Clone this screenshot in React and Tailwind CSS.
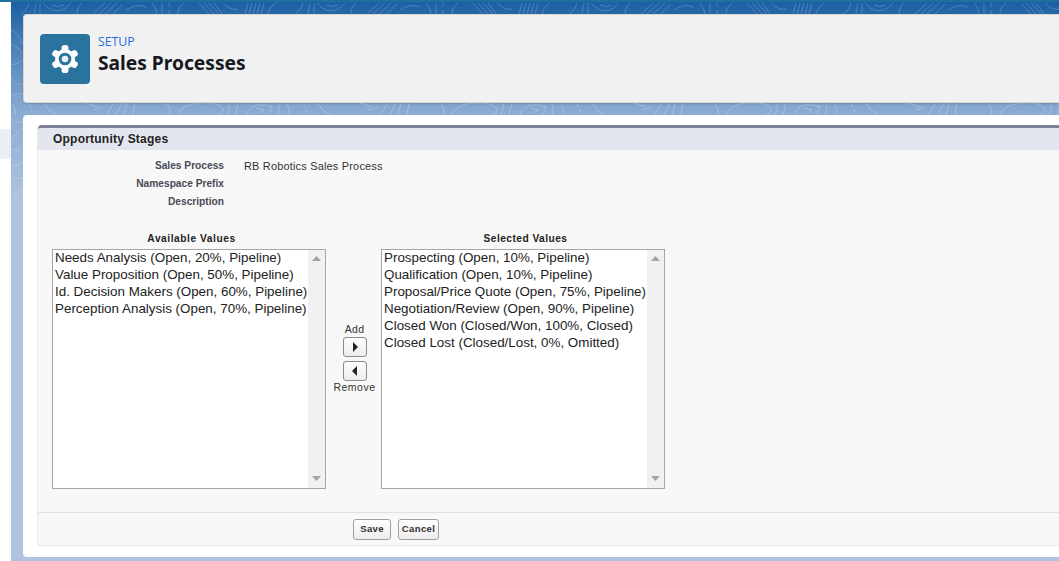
import React from "react";

const left = ["Needs Analysis (Open, 20%, Pipeline)", "Value Proposition (Open, 50%, Pipeline)", "Id. Decision Makers (Open, 60%, Pipeline)", "Perception Analysis (Open, 70%, Pipeline)"];
const right = ["Prospecting (Open, 10%, Pipeline)", "Qualification (Open, 10%, Pipeline)", "Proposal/Price Quote (Open, 75%, Pipeline)", "Negotiation/Review (Open, 90%, Pipeline)", "Closed Won (Closed/Won, 100%, Closed)", "Closed Lost (Closed/Lost, 0%, Omitted)"];

const topBand = "M5 14l3-11M9 14l3-11M13 14l3-11M17 14l3-11M21 14l3-11M28 14q2-8 8-11M55 14q6-3 8-11M68 14l2-11M74 3v11M77 3q14 16 28 0M86 5q6 3 12 0M111 14q0-7 5-11M127 14l12-11M133 14l12-11M139 14l12-11M147 14l10-10M160 10q10-7 20-3M186 3q5 6 5 11M196 3v11M203 3v4M203 10v4M212 14q0-7 6-11M233 3l10 11M238 3l10 11M243 3l10 11M248 3l8 11M257 3q8 8 15 6";
const lowBand = "M6 115q4-10 12-10q8-1 15 2M16 108l8 2l-4 3M30 106q3 5-2 9M38 103q2 6 0 12M47 104q3 5 2 11M64 104v3M66 109v3M78 103q4 8 12 12M120 103l12 4M128 110l10-3M140 115l8-12M150 115l6-12M158 115l3-12M167 115l2-12M200 103q6 6 3 12M212 115q3-10 20-12q20-2 25 6q0 6-6 6M263 103q2 6-2 12M272 103l-3 12";
const sideBand = "M11 30q8 4 12 14M11 44q6 2 12 10M23 60q-8 6-12 4M11 78q7 8 12 6M11 96q5-4 12-2M11 118q6 6 12 4M23 128q-8 4-12 14M11 150q8-2 12 6M23 162q-6 6-12 2M11 176q6 4 12 2M23 190q-5 4-12 2";

function Contours() {
  return (
    <svg className="absolute left-[-11px] top-[-2px] h-[561px] w-[1059px]" viewBox="0 0 1059 561" fill="none" stroke="#ffffff" strokeWidth="1">
      {[-1, 0, 1, 2, 3].map((k) => (
        <g key={k} transform={`translate(${240 + k * 274} 0)`}>
          <path d={topBand} strokeOpacity="0.2" />
          <path d={lowBand} strokeOpacity="0.24" />
        </g>
      ))}
      <path d={sideBand} strokeOpacity="0.2" />
    </svg>
  );
}

function Gear() {
  return (
    <svg width="30" height="30" viewBox="-15 -15 30 30">
      <circle r="10" fill="#fff" />
      {[0, 60, 120, 180, 240, 300].map((a) => (
        <rect key={a} x="-3.4" y="-14" width="6.800" height="8" rx="2.800" fill="#fff" transform={`rotate(${a})`} />
      ))}
      <circle r="6.300" fill="#2a739f" />
      <circle r="3.300" fill="#eaf1f6" />
    </svg>
  );
}

function Arrow({ dir, className = "" }) {
  return (
    <button className={`flex h-[20px] w-[24px] items-center justify-center rounded-[3px] border border-[#8a8a8a] bg-gradient-to-b from-white to-[#ececec] ${className}`}>
      <svg width="6" height="10" viewBox="0 0 6 10" fill="#222">
        {dir === "r" ? <path d="M1 0 L6 5 L1 10Z" /> : <path d="M5 0 L0 5 L5 10Z" />}
      </svg>
    </button>
  );
}

function ListBox({ items, width }) {
  return (
    <div className={`flex h-[240px] ${width} border border-[#a6a6a6] bg-white`}>
      <div className="mt-[-1px] min-w-0 flex-1 whitespace-nowrap pl-[2px] text-[13.4px] leading-[17px] text-[#222]">
        {items.map((t) => (
          <div key={t}>{t}</div>
        ))}
      </div>
      <div className="flex w-[17px] shrink-0 flex-col items-center justify-between bg-[#f1f1f1] pb-[7px] pt-[6px]">
        <svg width="9" height="5" viewBox="0 0 9 5" fill="#a3a3a3"><path d="M4.5 0 L9 5 L0 5Z" /></svg>
        <svg width="9" height="5" viewBox="0 0 9 5" fill="#a3a3a3"><path d="M0 0 L9 0 L4.5 5Z" /></svg>
      </div>
    </div>
  );
}

function Row({ label, value }) {
  return (
    <div className="flex h-[18px] items-center">
      <div className="w-[186px] text-right text-[10.2px] font-bold text-[#4a4a56]">{label}</div>
      <div className="pl-[20px] text-[10.9px] tracking-[0.22px] text-[#333]">{value}</div>
    </div>
  );
}

export default function App() {
  return (
    <div className="relative h-[561px] w-[1059px] overflow-hidden bg-white font-['Liberation_Sans',Arial,sans-serif]">
      <div className="h-[2px] bg-[#1f6f9f]" />
      <div className="flex h-[559px]">
        <div className="w-[11px] shrink-0 pt-[127px]">
          <div className="h-[30px] bg-[#e9f0f5]" />
        </div>
        <div className="relative min-w-0 flex-1 overflow-hidden bg-[linear-gradient(to_bottom,#1b5fa2_0px,#5a8bbf_60px,#8aabd2_110px,#b0c4df_200px,#b0c4df_100%)] pl-[12px] pt-[12px]">
          <Contours />
          <div className="relative flex h-[89px] items-center rounded-l-[4px] border-y border-l border-[#d9d7d2] bg-[#f1f1f1] pl-[16px] shadow-[0_1px_2px_rgba(0,0,0,0.15)]">
            <div className="flex h-[50px] w-[50px] items-center justify-center rounded-[4px] bg-[#2a739f]">
              <Gear />
            </div>
            <div className="ml-[8px] mt-[-9px]">
              <div className="font-['Open_Sans','Noto_Sans',sans-serif] text-[12.3px] leading-[16px] text-[#1f6ae6]">SETUP</div>
              <div className="mt-[1px] font-['Noto_Sans',sans-serif] text-[19.2px] font-bold leading-[24px] text-[#16181d]">Sales Processes</div>
            </div>
          </div>
          <div className="relative mt-[12px] h-[442px] rounded-l-[4px] bg-white pl-[14px] pt-[10px]">
            <div className="flex h-[421px] flex-col rounded-l-[4px] border-b border-l border-[#e9e9e9] bg-[#f8f8f8]">
              <div className="flex h-[25px] shrink-0 items-center rounded-tl-[4px] border-t-[3px] border-[#7a8097] bg-[#e3e6ef] pl-[15px] text-[12px] font-bold tracking-[0.22px] text-[#222]">
                Opportunity Stages
              </div>
              <div className="flex-1">
                <div className="pt-[7px]">
                  <Row label="Sales Process" value="RB Robotics Sales Process" />
                  <Row label="Namespace Prefix" />
                  <Row label="Description" />
                </div>
                <div className="ml-[14px] mt-[22px] flex items-start">
                  <div className="w-[274px]">
                    <div className="mb-[4px] h-[12px] pl-[5px] text-center text-[10.2px] font-bold leading-[12px] tracking-[0.55px] text-[#222]">Available Values</div>
                    <ListBox items={left} width="w-[274px]" />
                  </div>
                  <div className="flex w-[55px] flex-col items-center gap-[3px] pl-[2px] pt-[90px] text-[10.5px] leading-[12px] text-[#333]">
                    <div className="mb-[-1px] tracking-[0.3px]">Add</div>
                    <Arrow dir="r" />
                    <Arrow dir="l" className="mt-[1px]" />
                    <div className="mt-[-3px] tracking-[0.5px]">Remove</div>
                  </div>
                  <div className="w-[284px]">
                    <div className="mb-[4px] h-[12px] pl-[5px] text-center text-[10.2px] font-bold leading-[12px] tracking-[0.45px] text-[#222]">Selected Values</div>
                    <ListBox items={right} width="w-[284px]" />
                  </div>
                </div>
              </div>
              <div className="flex h-[33px] shrink-0 items-center gap-[7px] border-t border-[#e1e1e1] pl-[315px]">
                <button className="h-[21px] w-[38px] rounded-[3px] border border-[#a0a0a0] bg-gradient-to-b from-white to-[#ededed] text-[9.6px] font-bold tracking-[0.3px] text-[#333]">Save</button>
                <button className="h-[21px] w-[41px] rounded-[3px] border border-[#a0a0a0] bg-gradient-to-b from-white to-[#ededed] text-[9.6px] font-bold tracking-[0.3px] text-[#333]">Cancel</button>
              </div>
            </div>
          </div>
        </div>
      </div>
    </div>
  );
}
